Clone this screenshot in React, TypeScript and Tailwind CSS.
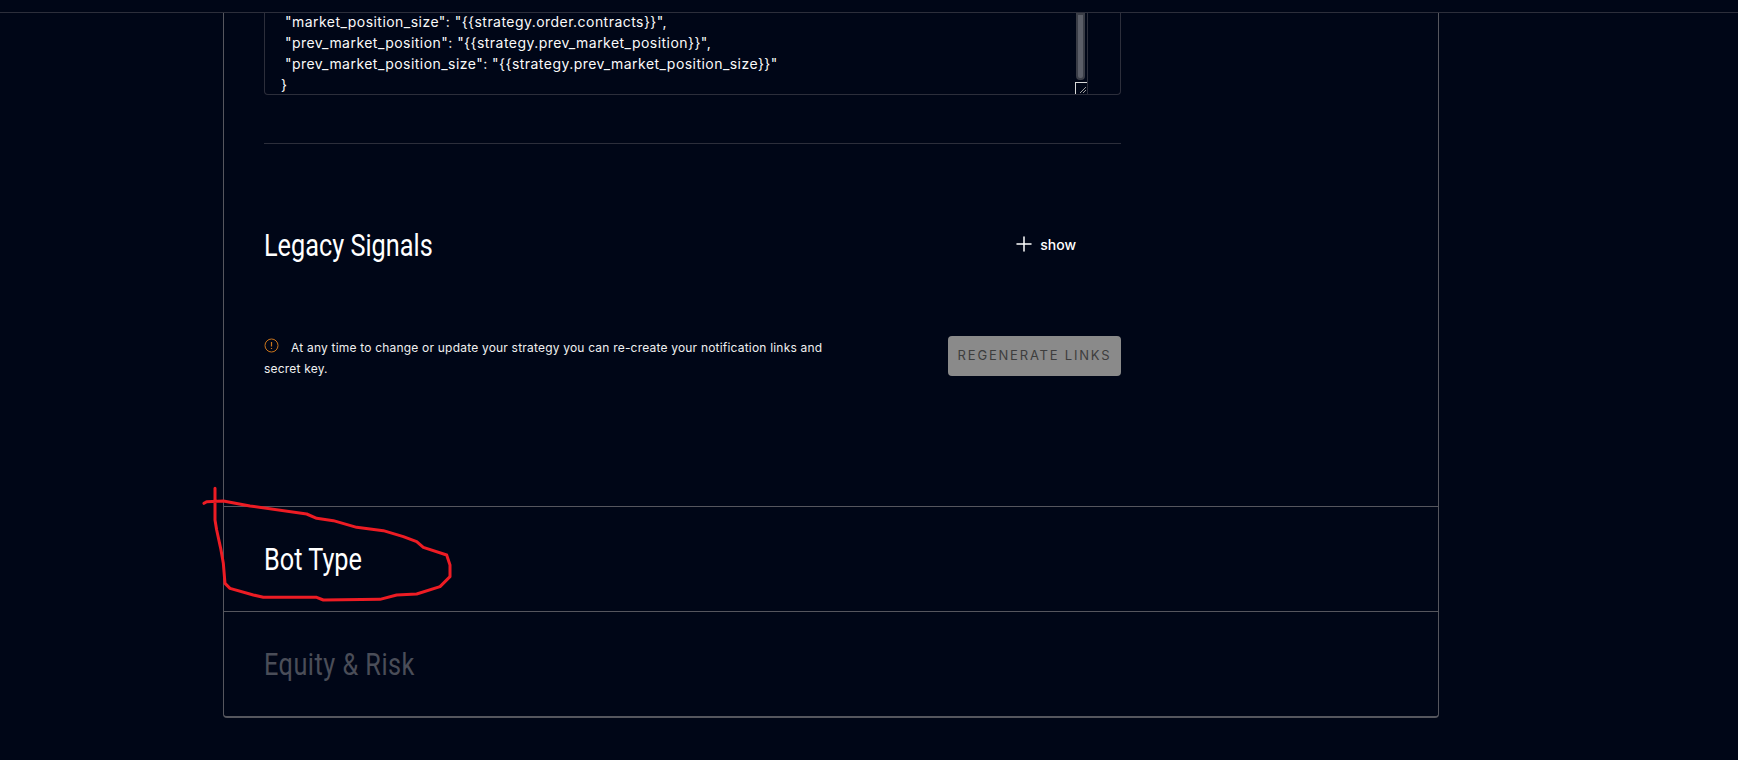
import { Plus } from 'lucide-react';

const jsonLines = [
  '"market_position_size": "{{strategy.order.contracts}}",',
  '"prev_market_position": "{{strategy.prev_market_position}}",',
  '"prev_market_position_size": "{{strategy.prev_market_position_size}}"',
];

const heading = "inline-block origin-left scale-x-[0.79] font-['Roboto',sans-serif] text-[32px] leading-[36px] whitespace-nowrap";

function Scribble() {
  return (
    <svg className="absolute left-[190px] top-[470px] pointer-events-none" width="290" height="150" viewBox="0 0 870 450" fill="none">
      <path
        d="M42 100 L50 95 L100 93 L180 108 L350 132 L380 145 L430 152 L500 172 L580 182 L640 200 L680 215 L700 232 L770 255 L780 285 L780 320 L750 350 L680 372 L620 375 L570 388 L400 390 L380 382 L220 382 L190 375 L120 355 L105 340 L100 280 L92 235 L80 180 L75 150 L75 55"
        stroke="#ed1c24"
        strokeWidth="9"
        strokeLinejoin="round"
        strokeLinecap="round"
      />
    </svg>
  );
}

export default function App() {
  return (
    <div className="relative h-[760px] overflow-hidden bg-[#000617] text-white font-['Inter',sans-serif]">
      <div className="h-[13px] border-b border-[#2c2e3b]" />

      <div className="ml-[223px] w-[1216px] rounded-b border-x border-b-2 border-x-[#55565e] border-b-[#55565e]">
        <div className="h-[493px] pl-10">
          <div className="w-[857px]">
            <div className="relative flex h-[82px] rounded-b border-x border-b border-[#2c2e3b]">
              <div className="-mt-[2px] flex-1 pl-4 text-[14px] leading-[21px] tracking-[0.46px] text-[#fafafa] whitespace-pre">
                {jsonLines.map((line, i) => (
                  <div key={i} className="pl-1">{line}</div>
                ))}
                <div>{'}'}</div>
              </div>
              <div className="h-[67px] w-[9px] shrink-0 rounded-b-sm border-2 border-[#3a3d47] bg-[#5b5e68]" />
              <div className="ml-[2px] w-[33px] shrink-0 border-l border-[#2c2e3b]" />
              <div className="absolute bottom-0 right-[33px] h-3 w-3 border-l border-t border-[#d8d8d8]">
                <svg className="absolute bottom-[1px] right-[1px]" width="6" height="6" viewBox="0 0 6 6">
                  <path d="M0 6 L6 0 M3 6 L6 3" stroke="#9a9a9a" strokeWidth="1" />
                </svg>
              </div>
            </div>

            <div className="mt-[48px] border-t border-[#2c2e3b]" />

            <div className="mt-[83px] flex items-center justify-between">
              <h2 className={heading}>Legacy Signals</h2>
              <div className="mb-[2px] mr-[45px] flex items-center gap-1 text-[14px] font-medium">
                <Plus size={24} strokeWidth={1.5} />
                <span>show</span>
              </div>
            </div>

            <div className="mt-[73px] flex items-start justify-between">
              <p className="w-[590px] pt-[1px] text-[12px] leading-[21px] tracking-[0.2px] text-[#f0f0f0]">
                <svg className="mr-3 inline-block align-[-1px]" width="15" height="15" viewBox="0 0 15 15" fill="none">
                  <circle cx="7.5" cy="7.5" r="6.5" stroke="#c9741c" strokeWidth="1" />
                  <path d="M7.5 4 V8.5 M7.5 10 V11" stroke="#c9741c" strokeWidth="1.2" />
                </svg>
                At any time to change or update your strategy you can re-create your notification links and secret key.
              </p>
              <button className="h-10 w-[173px] rounded bg-[#8a8a8a] text-[13px] tracking-[1.8px] text-[#3d3d3d]">
                REGENERATE LINKS
              </button>
            </div>
          </div>
        </div>

        <div className="flex h-[105px] items-center border-t border-[#55565e] pl-10">
          <h2 className={heading}>Bot Type</h2>
        </div>
        <div className="flex h-[105px] items-center border-t border-[#55565e] pl-10">
          <h2 className={`${heading} tracking-[0.6px] text-[#4a4d58]`}>Equity &amp; Risk</h2>
        </div>
      </div>

      <Scribble />
    </div>
  );
}
